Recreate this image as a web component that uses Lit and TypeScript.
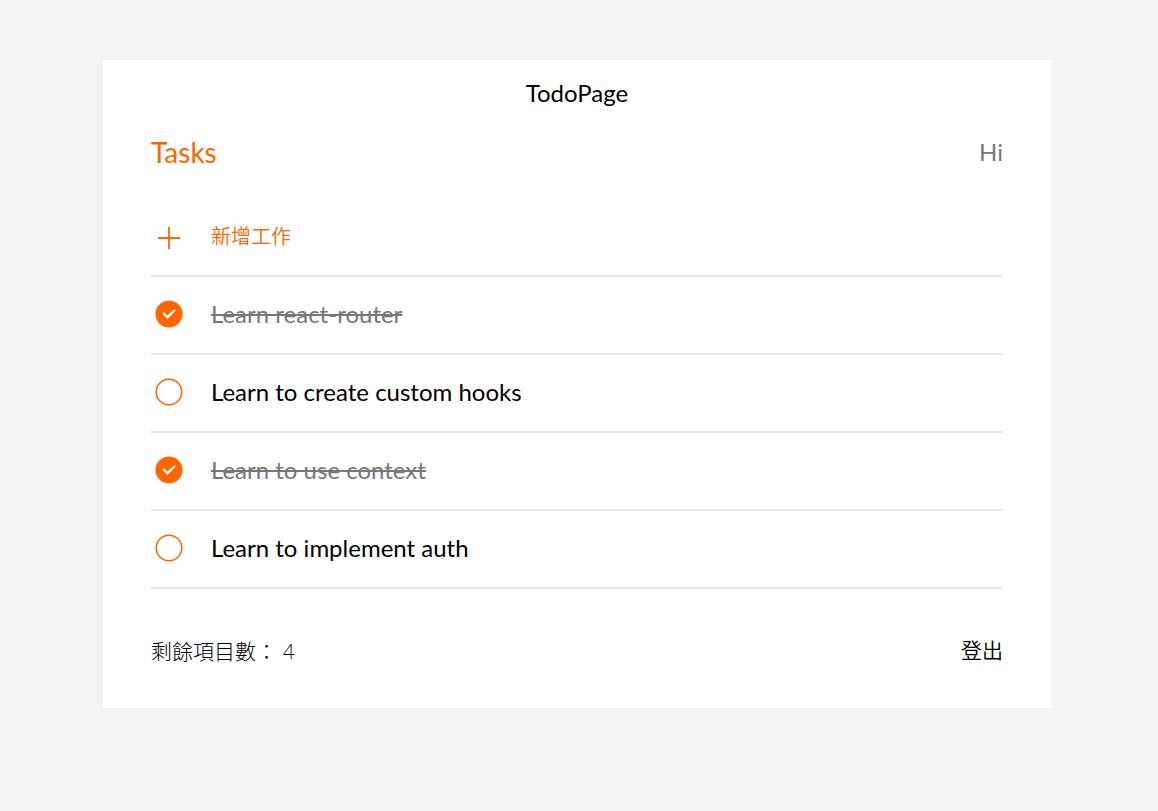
import { LitElement, html, css, svg } from "lit";
import { customElement, property, state } from "lit/decorators.js";

interface Todo {
  id: number;
  title: string;
  done: boolean;
}

@customElement("todo-item")
class TodoItem extends LitElement {
  @property({ attribute: false }) todo!: Todo;

  static styles = css`
    :host {
      display: block;
      border-bottom: 2px solid #e8e8e8;
    }
    .row {
      display: flex;
      box-sizing: border-box;
      align-items: center;
      height: 76px;
      padding-bottom: 2px;
      gap: 24px;
      cursor: pointer;
    }
    .box {
      position: relative;
      display: flex;
      width: 36px;
      height: 36px;
      align-items: center;
      justify-content: center;
    }
    input {
      position: absolute;
      inset: 0;
      width: 100%;
      height: 100%;
      margin: 0;
      opacity: 0;
    }
    .title {
      font-size: 24px;
      line-height: 30px;
      color: #000;
    }
    input:checked ~ svg .ring {
      fill: #ff6600;
    }
    .done .title {
      color: #777;
      text-decoration: line-through 2px;
    }
  `;

  private toggle() {
    this.dispatchEvent(new CustomEvent("toggle-todo", { detail: this.todo.id }));
  }

  render() {
    const { title, done } = this.todo;
    return html`
      <label class="row ${done ? "done" : ""}">
        <span class="box">
          <input type="checkbox" .checked=${done} @change=${this.toggle} />
          <svg width="28" height="28" viewBox="0 0 28 28" fill="none" aria-hidden="true">
            <circle class="ring" cx="14" cy="14" r="12.8" stroke="#ff6600" stroke-width="1.5" />
            ${done
              ? svg`<path d="M8.2 13.2 12.4 17.1 19.9 10" stroke="#fff" stroke-width="2.3" />`
              : ""}
          </svg>
        </span>
        <span class="title">${title}</span>
      </label>
    `;
  }
}

@customElement("app-root")
class AppRoot extends LitElement {
  @state() private todos: Todo[] = [
    { id: 1, title: "Learn react-router", done: true },
    { id: 2, title: "Learn to create custom hooks", done: false },
    { id: 3, title: "Learn to use context", done: true },
    { id: 4, title: "Learn to implement auth", done: false },
  ];

  static styles = css`
    :host {
      display: block;
      box-sizing: border-box;
      min-height: 100vh;
      padding: 60px 107px 60px 103px;
      background: #f4f4f4;
      font-family: Lato, "Noto Sans CJK TC", sans-serif;
      color: #000;
    }
    main {
      padding: 16px 48px 39px;
      background: #fff;
    }
    .page {
      text-align: center;
      font-size: 24px;
      line-height: 34px;
    }
    header,
    footer {
      display: flex;
      align-items: center;
      justify-content: space-between;
    }
    header {
      margin: 24px 0 29px;
    }
    h1 {
      margin: 0;
      font-size: 28px;
      line-height: 36px;
      font-weight: 400;
      color: #ff6600;
    }
    .greet {
      font-size: 24px;
      line-height: 36px;
      color: #777;
    }
    .add {
      display: flex;
      box-sizing: border-box;
      align-items: center;
      gap: 24px;
      height: 78px;
      padding-bottom: 2px;
      border-bottom: 2px solid #e8e8e8;
    }
    .plus {
      display: flex;
      box-sizing: border-box;
      width: 36px;
      height: 36px;
      padding: 4px 0 0;
      border: 0;
      background: none;
      align-items: center;
      justify-content: center;
    }
    .entry {
      flex: 1;
      padding: 0;
      border: 0;
      outline: 0;
      background: none;
      font: 350 20px / 30px "Noto Sans CJK TC", sans-serif;
      color: #000;
    }
    .entry::placeholder {
      color: #ff6600;
      opacity: 1;
    }
    footer {
      align-items: flex-start;
      margin-top: 44px;
      font-size: 21px;
      line-height: 36px;
      font-weight: 300;
    }
    .logout {
      padding: 0;
      border: 0;
      background: none;
      font: 350 21px / 32px "Noto Sans CJK TC", sans-serif;
      color: #000;
    }
  `;

  private toggle(e: CustomEvent<number>) {
    this.todos = this.todos.map((t) => (t.id === e.detail ? { ...t, done: !t.done } : t));
  }

  private add(e: Event) {
    e.preventDefault();
    const input = this.renderRoot.querySelector<HTMLInputElement>(".entry")!;
    const title = input.value.trim();
    if (!title) return;
    this.todos = [...this.todos, { id: Date.now(), title, done: false }];
    input.value = "";
  }

  render() {
    return html`
      <main lang="zh-Hant">
        <div class="page">TodoPage</div>
        <header>
          <h1>Tasks</h1>
          <span class="greet">Hi</span>
        </header>
        <form class="add" @submit=${this.add}>
          <button class="plus" aria-label="新增">
            <svg width="24" height="24" viewBox="0 0 24 24" fill="none" stroke="#ff6600" stroke-width="1.8" aria-hidden="true">
              <path d="M12 1v22M1 12h22" />
            </svg>
          </button>
          <input class="entry" type="text" placeholder="新增工作" aria-label="新增工作" />
        </form>
        ${this.todos.map((t) => html`<todo-item .todo=${t} @toggle-todo=${this.toggle}></todo-item>`)}
        <footer>
          <span>剩餘項目數： ${this.todos.length}</span>
          <button class="logout" type="button">登出</button>
        </footer>
      </main>
    `;
  }
}
